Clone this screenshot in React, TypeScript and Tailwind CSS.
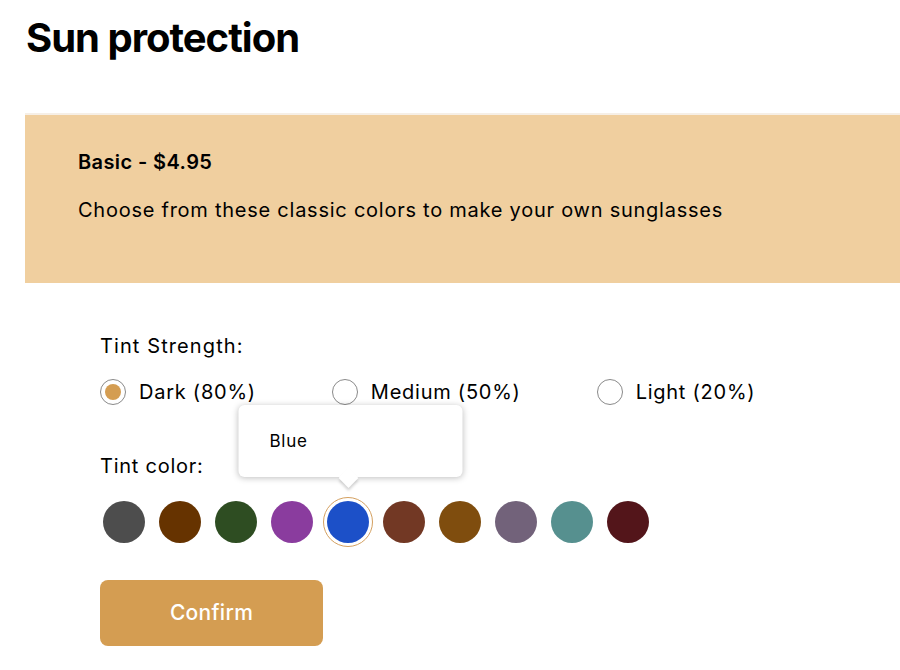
import React, { useState } from 'react';

const tintOptions = ['Dark (80%)', 'Medium (50%)', 'Light (20%)'];

const colors = [
  { name: 'Grey', hex: '#4d4d4d' },
  { name: 'Brown', hex: '#663300' },
  { name: 'Green', hex: '#2e4d22' },
  { name: 'Purple', hex: '#8a3c9e' },
  { name: 'Blue', hex: '#1c50c8' },
  { name: 'Rust', hex: '#723824' },
  { name: 'Amber', hex: '#7f4d0e' },
  { name: 'Mauve', hex: '#72627a' },
  { name: 'Teal', hex: '#56908f' },
  { name: 'Wine', hex: '#53151a' },
];

const App: React.FC = () => {
  const [tint, setTint] = useState(0);
  const [color, setColor] = useState(4);

  return (
    <div className="min-h-screen bg-white text-black font-['Inter',sans-serif] tracking-[0.75px]">
      <h1 className="pl-[26px] pt-[14px] text-[40px] font-bold leading-[48px] tracking-[-1px]">Sun protection</h1>

      {/* Package banner */}
      <div className="ml-[25px] mt-[51px] h-[170px] border-t-2 border-[#f6efe6] bg-[#f0cf9f] pl-[53px] pt-[33px]">
        <p className="text-[20px] font-semibold leading-[28px] tracking-[0.4px]">Basic - $4.95</p>
        <p className="mt-[20px] text-[20px] leading-[28px]">Choose from these classic colors to make your own sunglasses</p>
      </div>

      <div className="pl-[100px] pt-[49px]">
        <p className="text-[20px] leading-[28px] tracking-[1.1px]">Tint Strength:</p>

        <div className="mt-[18px] flex gap-[76px]">
          {tintOptions.map((label, i) => (
            <button key={label} onClick={() => setTint(i)} className="flex items-center gap-[13px] text-[20px] leading-[28px]">
              <span className="flex h-[26px] w-[26px] items-center justify-center rounded-full border border-[#8a8a8a]">
                {tint === i && <span className="h-[16px] w-[16px] rounded-full bg-[#d49d52]" />}
              </span>
              <span>{label}</span>
            </button>
          ))}
        </div>

        <p className="mt-[46px] text-[20px] leading-[28px]">Tint color:</p>

        <div className="mt-[17px] flex gap-[14px] pl-[3px]">
          {colors.map((c, i) => (
            <button
              key={c.name}
              onClick={() => setColor(i)}
              className="relative flex h-[50px] w-[42px] items-center justify-center"
            >
              {color === i && (
                <>
                  <span className="absolute left-1/2 top-1/2 h-[50px] w-[50px] -translate-x-1/2 -translate-y-1/2 rounded-full border-[1.5px] border-[#d4a060]" />
                  <div className="absolute bottom-[70px] left-1/2 z-10 -translate-x-1/2">
                    <div className="relative ml-[5px] h-[72px] w-[224px] rounded-md bg-white shadow-[0_1px_6px_rgba(0,0,0,0.25)]">
                      <span className="absolute left-[31px] top-[25px] text-[17px] leading-[22px]">{c.name}</span>
                      <span className="absolute bottom-[-8px] left-[103px] h-[14px] w-[14px] rotate-45 bg-white shadow-[2px_2px_3px_rgba(0,0,0,0.18)]" />
                    </div>
                  </div>
                </>
              )}
              <span className="h-[42px] w-[42px] rounded-full" style={{ backgroundColor: c.hex }} />
            </button>
          ))}
        </div>

        <button className="mt-[33px] h-[66px] w-[223px] rounded-lg bg-[#d49d52] text-[21px] font-medium tracking-[0.3px] text-white">
          Confirm
        </button>
      </div>
    </div>
  );
};

export default App;
